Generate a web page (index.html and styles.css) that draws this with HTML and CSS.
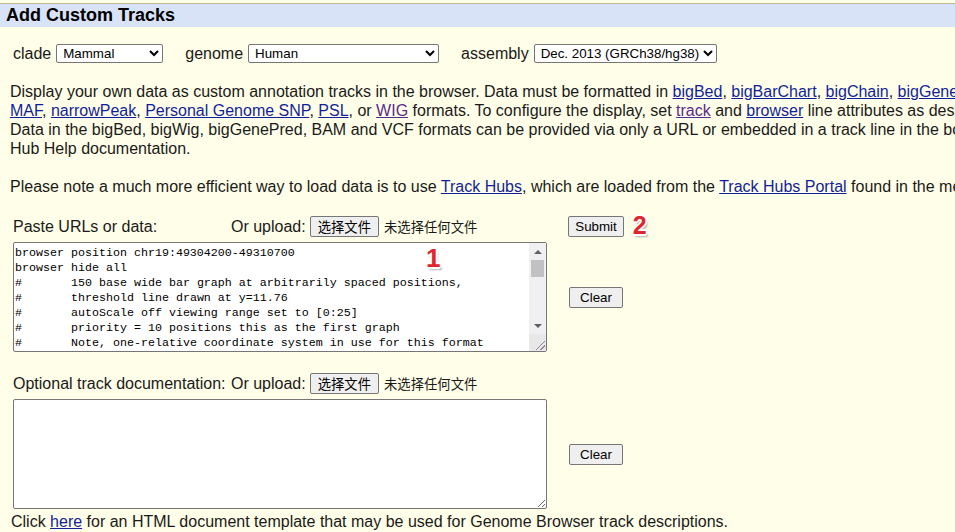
FILE: index.html
```html
<!DOCTYPE html>
<html lang="en">
<head>
<meta charset="utf-8">
<title>Add Custom Tracks</title>
<link rel="stylesheet" href="styles.css">
</head>
<body>
<div class="titlebar">Add Custom Tracks</div>

<div class="selectors">
  <label class="sel-group">clade <select class="sel-clade"><option>Mammal</option></select></label>
  <label class="sel-group">genome <select class="sel-genome"><option>Human</option></select></label>
  <label class="sel-group">assembly <select class="sel-assembly"><option>Dec. 2013 (GRCh38/hg38)</option></select></label>
</div>

<p class="intro">Display your own data as custom annotation tracks in the browser. Data must be formatted in <a href="#">bigBed</a>, <a href="#">bigBarChart</a>, <a href="#">bigChain</a>, <a href="#">bigGenePred</a>, <a href="#">bigInteract</a>, <a href="#">bigLolly</a>, <a href="#">bigMaf</a>, <a href="#">bigNarrowPeak</a>, <a href="#">bigPsl</a>, <a href="#">bigWig</a>, <a href="#">BAM</a>, <a href="#">CRAM</a>, <a href="#">VCF</a>, <a href="#">BED</a>, <a href="#">BED detail</a>, <a href="#">bedGraph</a>, <a href="#">broadPeak</a>, <a href="#">GTF</a>, <a href="#">GFF</a>, <a href="#">HAL</a>, <a href="#">hic</a>, <a href="#">interact</a>,<br><a href="#">MAF</a>, <a href="#">narrowPeak</a>, <a href="#">Personal Genome SNP</a>, <a href="#">PSL</a>, or <a href="#" class="visited">WIG</a> formats. To configure the display, set <a href="#" class="visited">track</a> and <a href="#">browser</a> line attributes as described in the <a href="#">User's Guide</a>.<br>Data in the bigBed, bigWig, bigGenePred, BAM and VCF formats can be provided via only a URL or embedded in a track line in the box below. Examples are <a href="#">here</a>. If you do not have web-accessible data storage available, please see the <a href="#">Hosting</a> section of the Track<br>Hub Help documentation.</p>

<p class="note">Please note a much more efficient way to load data is to use <a href="#">Track Hubs</a>, which are loaded from the <a href="#">Track Hubs Portal</a> found in the menu under My Data.</p>

<div class="section section-paste">
  <div class="label">Paste URLs or data:</div>
  <div class="upload">Or upload: <button class="btn file-btn" type="button">选择文件</button><span class="nofile">未选择任何文件</span></div>
  <div class="act"><span class="submit-wrap"><button class="btn" type="button">Submit</button><span class="badge badge-2">2</span></span></div>
  <div class="area-wrap"><textarea class="area paste" spellcheck="false">
browser position chr19:49304200-49310700
browser hide all
#&#9;150 base wide bar graph at arbitrarily spaced positions,
#&#9;threshold line drawn at y=11.76
#&#9;autoScale off viewing range set to [0:25]
#&#9;priority = 10 positions this as the first graph
#&#9;Note, one-relative coordinate system in use for this format
track type=wiggle_0 name="variableStep" description="variableStep format" visibility=full autoScale=off viewLimits=0.0:25.0 color=50,150,255 yLineMark=11.76 yLineOnOff=on priority=10
variableStep chrom=chr19 span=150
49304701 10.0
49304901 12.5
49305401 15.0
49305601 17.5
49305901 20.0
49306081 17.5
49306301 15.0
49306691 12.5
49307871 10.0
#&#9;200 base wide points graph at every 300 bases, 50 pixel high graph
#&#9;autoScale off and viewing range set to [0:1000]
#&#9;priority = 20 positions this as the second graph
#&#9;Note, one-relative coordinate system in use for this format
track type=wiggle_0 name="fixedStep" description="fixedStep format" visibility=full autoScale=off viewLimits=0:1000 color=0,200,100 maxHeightPixels=100:50:20 graphType=points priority=20
fixedStep chrom=chr19 start=49307401 step=300 span=200
1000
900
800
700
600
500
400
300
200
100</textarea><div class="vscroll" aria-hidden="true"><span class="sb-btn sb-up"></span><span class="sb-track"><span class="sb-thumb"></span></span><span class="sb-btn sb-down"></span><span class="sb-corner"></span></div><span class="badge badge-1">1</span></div>
  <div class="act"><button class="btn clear-btn" type="button">Clear</button></div>
</div>

<div class="section section-doc">
  <div class="label">Optional track documentation:</div>
  <div class="upload">Or upload: <button class="btn file-btn" type="button">选择文件</button><span class="nofile">未选择任何文件</span></div>
  <div class="act"></div>
  <div class="area-wrap"><textarea class="area doc" spellcheck="false"></textarea></div>
  <div class="act"><button class="btn clear-btn" type="button">Clear</button></div>
</div>

<p class="footer">Click <a href="#">here</a> for an HTML document template that may be used for Genome Browser track descriptions.</p>
</body>
</html>
```

FILE: styles.css
```css
html, body {
  margin: 0;
  padding: 0;
  overflow: hidden;
}

body {
  background: #fffee8;
  color: #1a1a1a;
  font-family: "Liberation Sans", Arial, sans-serif;
  font-size: 16px;
  width: 955px;
  height: 532px;
}

a {
  color: #121e9a;
}

a.visited {
  color: #5b2a8f;
}

.titlebar {
  margin-top: 3px;
  border-top: 1px solid #c4b991;
  background: #d9e3f7;
  height: 23px;
  line-height: 23px;
  padding-left: 6px;
  font-weight: bold;
  font-size: 18px;
  color: #000;
}

.selectors {
  display: flex;
  align-items: center;
  gap: 22px;
  margin: 17px 0 0 13px;
  height: 19px;
}

.sel-group {
  display: flex;
  align-items: center;
  gap: 5px;
  line-height: 19px;
}

select {
  box-sizing: border-box;
  height: 19px;
  font-family: "Liberation Sans", Arial, sans-serif;
  font-size: 13.33px;
  color: #000;
  background-color: #fff;
  border: 1px solid #767676;
  border-radius: 2px;
  padding: 0 0 0 2px;
}

.sel-clade { width: 107px; }
.sel-genome { width: 191px; }
.sel-assembly { width: 183px; }

.intro {
  margin: 19px 0 0 10px;
  line-height: 19px;
  white-space: nowrap;
}

.note {
  margin: 19px 0 0 10px;
  line-height: 19px;
  white-space: nowrap;
}

.section {
  display: grid;
  grid-template-columns: 218px 316px 98px;
  grid-template-rows: 21px 110px;
  row-gap: 5px;
  margin-left: 13px;
}

.section-paste { margin-top: 20px; }
.section-doc { margin-top: 21px; }

.label {
  line-height: 19px;
  white-space: nowrap;
  align-self: center;
}

.upload {
  display: flex;
  align-items: center;
  gap: 4px;
  white-space: nowrap;
  line-height: 19px;
}

.btn {
  box-sizing: border-box;
  height: 21px;
  padding: 0 6px;
  font-family: "Liberation Sans", Arial, "Noto Sans CJK SC", sans-serif;
  font-size: 13.33px;
  line-height: 17px;
  color: #000;
  background: #efefef;
  border: 1px solid #767676;
  border-radius: 2px;
}

.file-btn {
  font-family: "Noto Sans CJK SC", sans-serif;
  padding: 0 7px;
}

.clear-btn {
  padding: 0 10px;
}

.nofile {
  font-family: "Noto Sans CJK SC", sans-serif;
  font-size: 13.33px;
  color: #1a1a1a;
  margin-left: 1px;
}

.act {
  display: flex;
  align-items: center;
  justify-content: center;
}

.submit-wrap {
  position: relative;
  display: inline-block;
  height: 21px;
}

.area-wrap {
  position: relative;
  grid-column: 1 / 3;
}

.area {
  display: block;
  box-sizing: border-box;
  width: 534px;
  height: 110px;
  margin: 0;
  border: 1px solid #767676;
  border-radius: 2px;
  background: #fff;
  color: #000;
  font-family: "Liberation Mono", "Courier New", monospace;
  font-size: 11.67px;
  line-height: 15px;
  padding: 3px 2px 2px 1px;
  tab-size: 8;
  resize: both;
  outline: none;
}

.paste {
  overflow: hidden;
  resize: none;
  padding-right: 20px;
}

/* drawn vertical scrollbar of the paste box */
.vscroll {
  position: absolute;
  top: 1px;
  right: 1px;
  bottom: 1px;
  width: 17px;
  display: flex;
  flex-direction: column;
  background: #f0f0f0;
  pointer-events: none;
}

.sb-btn {
  height: 17px;
  flex: none;
  display: flex;
  align-items: center;
  justify-content: center;
}

.sb-up::before {
  content: "";
  border-left: 4px solid transparent;
  border-right: 4px solid transparent;
  border-bottom: 4px solid #606060;
}

.sb-down::before {
  content: "";
  border-left: 4px solid transparent;
  border-right: 4px solid transparent;
  border-top: 4px solid #606060;
}

.sb-track {
  flex: 1;
  display: flex;
  flex-direction: column;
}

.sb-thumb {
  height: 17px;
  margin: 0 2px;
  background: #c1c1c1;
}

.sb-corner {
  height: 17px;
  flex: none;
  background-color: #e8e8e8;
  background-image: linear-gradient(135deg, transparent 0 56%, #8a8a8a 56% 62%, transparent 62% 76%, #8a8a8a 76% 82%, transparent 82%);
  background-size: 11px 11px;
  background-position: right 1px bottom 1px;
  background-repeat: no-repeat;
}

.badge {
  position: absolute;
  font-family: "Liberation Sans", Arial, sans-serif;
  font-weight: bold;
  line-height: 1;
  color: #e0262b;
  pointer-events: none;
  text-shadow:
    -1px -1px 0 #fff, 1px -1px 0 #fff, -1px 1px 0 #fff, 1px 1px 0 #fff,
    0 -2px 0 #fff, 0 2px 0 #fff, -2px 0 0 #fff, 2px 0 0 #fff,
    2px 3px 2px rgba(0, 0, 0, 0.3);
}

.badge-1 {
  font-size: 26px;
  left: 413px;
  top: 3px;
}

.badge-2 {
  font-size: 25px;
  left: calc(100% + 9px);
  top: -3px;
}

.footer {
  margin: 3px 0 0 11px;
  line-height: 19px;
  white-space: nowrap;
}
```
